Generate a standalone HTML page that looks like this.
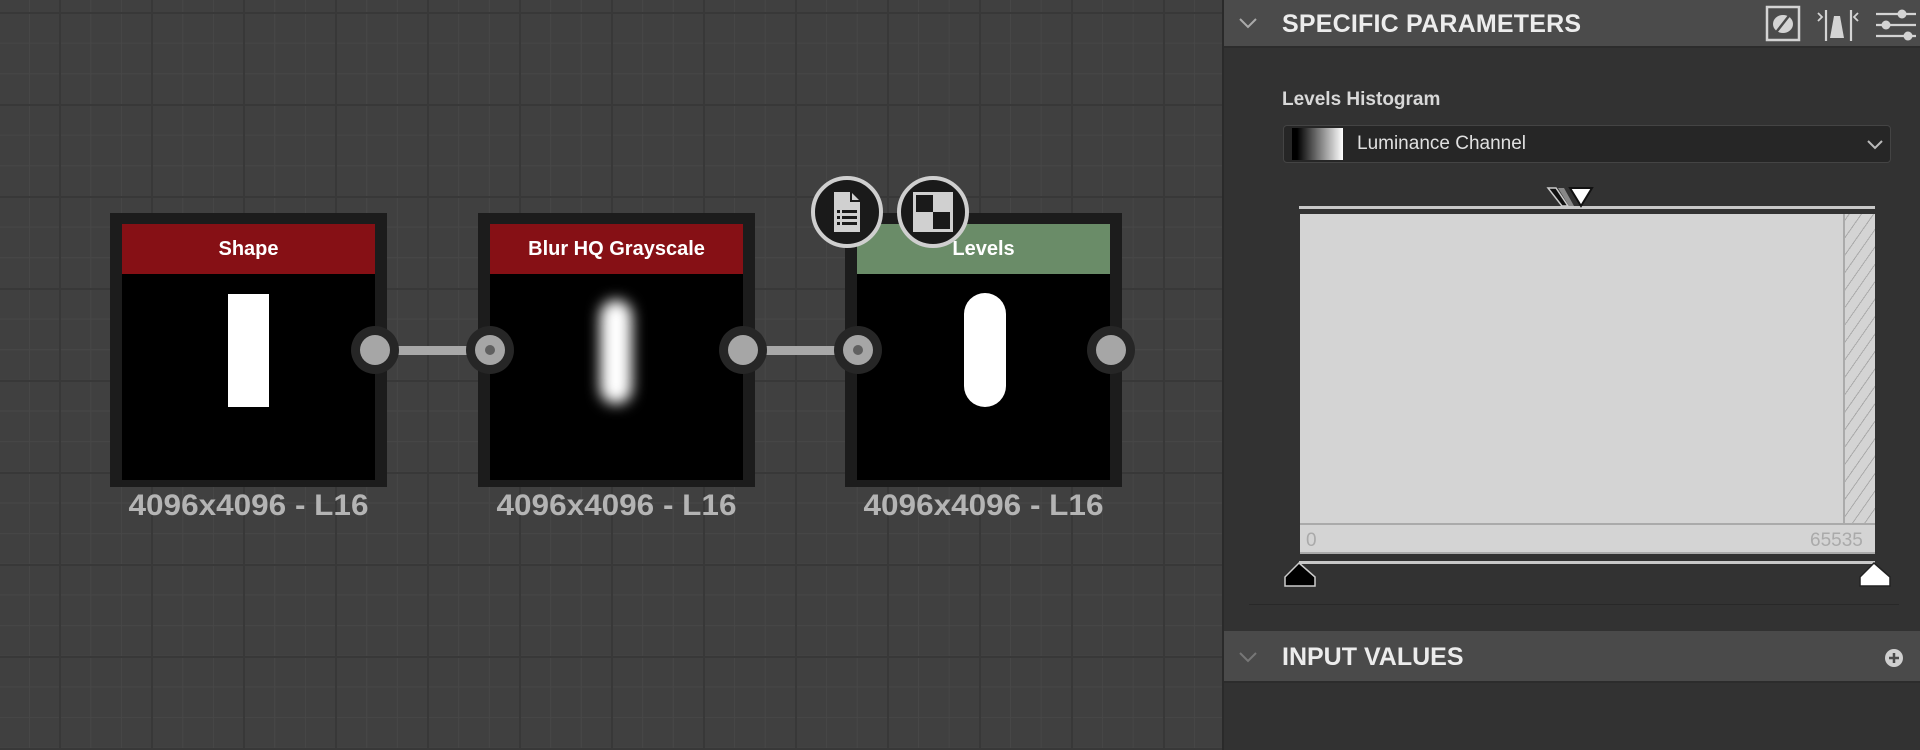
<!DOCTYPE html>
<html><head><meta charset="utf-8"><style>
*{margin:0;padding:0;box-sizing:border-box}
body{width:1920px;height:750px;overflow:hidden;position:relative;background:#404040;font-family:"Liberation Sans",sans-serif}
#graph{position:absolute;left:0;top:0;width:1222px;height:750px;background-color:#404040;
background-image:
linear-gradient(to right,#383838 0,#383838 2px,transparent 2px),
linear-gradient(to bottom,#383838 0,#383838 2px,transparent 2px),
linear-gradient(to right,#474747 0,#474747 1px,transparent 1px),
linear-gradient(to bottom,#474747 0,#474747 1px,transparent 1px);
background-size:92px 92px,92px 92px,30.67px 30.67px,30.67px 30.67px;
background-position:59px 0,0 12px,29px 0,0 12px}
.node{position:absolute;top:213px;width:277px;height:274px;background:#1c1c1c}
.hd{position:absolute;left:12px;top:11px;width:253px;height:50px;color:#fff;font-weight:bold;font-size:20px;text-align:center;line-height:50px}
.bd{position:absolute;left:12px;top:61px;width:253px;height:206px;background:#000;overflow:hidden}
.lbl{position:absolute;top:489px;left:0;width:277px;text-align:center;color:#b4b4b4;font-weight:bold;font-size:30px;transform:scaleX(1.05)}
.sock{position:absolute;width:48px;height:48px;border-radius:50%;background:#262626}
.sock i{position:absolute;left:9px;top:9px;width:30px;height:30px;border-radius:50%;background:#a6a6a6}
.sock b{position:absolute;left:19px;top:19px;width:10px;height:10px;border-radius:50%;background:#606060}
.wire{position:absolute;height:9px;top:346px;background:#a8a8a8}
.ci{position:absolute;width:72px;height:72px;border-radius:50%;background:#1a1a1a;border:4px solid #cfcfcf}
#panel{position:absolute;left:1222px;top:0;width:698px;height:750px;background:#323232;border-left:2px solid #2a2a2a}
.ph{position:absolute;left:0;width:698px;background:#4b4b4b;color:#ececec;font-weight:bold;font-size:25px}
</style></head><body>
<div id="graph">
<div class="wire" style="left:395px;width:90px"></div>
<div class="wire" style="left:763px;width:90px"></div>

<div class="node" style="left:110px"><div class="hd" style="background:#861015">Shape</div><div class="bd"><div style="position:absolute;left:106px;top:20px;width:41px;height:113px;background:#fff"></div></div></div>
<div style="position:absolute;left:110px"><div class="lbl">4096x4096 - L16</div></div>

<div class="node" style="left:478px"><div class="hd" style="background:#861015">Blur HQ Grayscale</div><div class="bd"><div style="position:absolute;left:110px;top:26px;width:32px;height:104px;background:#fff;border-radius:16px;filter:blur(7px)"></div></div></div>
<div style="position:absolute;left:478px"><div class="lbl">4096x4096 - L16</div></div>

<div class="node" style="left:845px"><div class="hd" style="background:#6a8c68">Levels</div><div class="bd"><div style="position:absolute;left:107px;top:19px;width:42px;height:114px;background:#fff;border-radius:21px"></div></div></div>
<div style="position:absolute;left:845px"><div class="lbl">4096x4096 - L16</div></div>

<div class="sock" style="left:351px;top:326px"><i></i></div>
<div class="sock" style="left:466px;top:326px"><i></i><b></b></div>
<div class="sock" style="left:719px;top:326px"><i></i></div>
<div class="sock" style="left:834px;top:326px"><i></i><b></b></div>
<div class="sock" style="left:1087px;top:326px"><i></i></div>

<div class="ci" style="left:811px;top:176px"><svg width="64" height="64" viewBox="0 0 64 64" style="position:absolute;left:0;top:0"><path d="M19 12h17l9 9v31H19z" fill="#d0d0d0"/><path d="M36 12v9h9" fill="none" stroke="#1a1a1a" stroke-width="2"/><g fill="#1a1a1a"><rect x="22" y="30" width="3" height="3"/><rect x="27" y="30" width="15" height="3"/><rect x="22" y="36" width="3" height="3"/><rect x="27" y="36" width="15" height="3"/><rect x="22" y="42" width="3" height="3"/><rect x="27" y="42" width="15" height="3"/></g></svg></div>
<div class="ci" style="left:897px;top:176px"><svg width="64" height="64" viewBox="0 0 64 64" style="position:absolute;left:0;top:0"><rect x="12" y="12" width="40" height="40" fill="#d0d0d0"/><rect x="15" y="15" width="17" height="17" fill="#1a1a1a"/><rect x="32" y="32" width="17" height="17" fill="#1a1a1a"/></svg></div>
</div>

<div id="panel">
<div class="ph" style="top:0;height:48px;border-bottom:2px solid #2c2c2c">
<svg style="position:absolute;left:14px;top:17px" width="20" height="12"><path d="M2 2l8 8 8-8" fill="none" stroke="#aaa" stroke-width="2"/></svg>
<span style="position:absolute;left:58px;top:10px;letter-spacing:0.2px">SPECIFIC PARAMETERS</span>
<svg style="position:absolute;left:540px;top:4px" width="156" height="40">
<rect x="3" y="3" width="32" height="33" fill="none" stroke="#d4d4d4" stroke-width="2.5"/><ellipse cx="19" cy="20" rx="10" ry="9" fill="#d4d4d4"/><path d="M10 31L28 8" stroke="#4b4b4b" stroke-width="2.5"/>
<path d="M54 9l4 4-4 4M94 9l-4 4 4 4" fill="none" stroke="#d4d4d4" stroke-width="1.8"/><path d="M62 6v31M87 6v31" stroke="#d4d4d4" stroke-width="2.2"/><path d="M66 34l4-22h6l4 22z" fill="#d4d4d4"/>
<path d="M112 10h40M112 21h40M112 32h40" stroke="#d4d4d4" stroke-width="2.2"/><circle cx="138" cy="10" r="4.5" fill="#d4d4d4"/><circle cx="122" cy="21" r="4.5" fill="#d4d4d4"/><circle cx="144" cy="32" r="4.5" fill="#d4d4d4"/></svg>
</div>
<div style="position:absolute;left:58px;top:89px;color:#d8d8d8;font-weight:bold;font-size:19px">Levels Histogram</div>
<div style="position:absolute;left:59px;top:125px;width:608px;height:38px;border:1px solid #444;border-radius:4px;background:#262626">
<div style="position:absolute;left:8px;top:2px;width:51px;height:32px;background:linear-gradient(to right,#000 10%,#fff)"></div>
<span style="position:absolute;left:73px;top:7px;color:#e0e0e0;font-size:19px">Luminance Channel</span>
<svg style="position:absolute;left:582px;top:13px" width="18" height="12"><path d="M2 2l7 7 7-7" fill="none" stroke="#bbb" stroke-width="2"/></svg>
</div>
<div style="position:absolute;left:75px;top:206px;width:576px;height:3px;background:#c8c8c8"></div>
<svg style="position:absolute;left:320px;top:184px" width="50" height="26"><path d="M4 4h8l12 18h-6z" fill="#111" stroke="#ccc" stroke-width="1.5"/><path d="M14 4h6l10 18h-5z" fill="#888"/><path d="M26 4h22l-11 18z" fill="#fff" stroke="#111" stroke-width="2"/></svg>
<div style="position:absolute;left:76px;top:214px;width:575px;height:340px;background:#d4d4d4;border-bottom:2px solid #aaa"></div>
<div style="position:absolute;left:619px;top:214px;width:32px;height:311px;border-left:2px solid #aaa;background:repeating-linear-gradient(-55deg,#d4d4d4 0,#d4d4d4 9px,#aaa 9px,#aaa 10px)"></div>
<div style="position:absolute;left:76px;top:523px;width:575px;height:2px;background:#aaa"></div>
<span style="position:absolute;left:82px;top:530px;color:#aaa;font-size:19px">0</span>
<span style="position:absolute;left:586px;top:530px;color:#aaa;font-size:19px">65535</span>
<div style="position:absolute;left:75px;top:561px;width:576px;height:3px;background:#c8c8c8"></div>
<svg style="position:absolute;left:58px;top:560px" width="36" height="28"><path d="M17 3L33 17v9H3v-9z" fill="#000" stroke="#ccc" stroke-width="1.5"/></svg>
<svg style="position:absolute;left:633px;top:560px" width="36" height="28"><path d="M17 3L33 17v9H3v-9z" fill="#fff" stroke="#222" stroke-width="1.5"/></svg>
<div style="position:absolute;left:25px;top:604px;width:650px;height:1px;background:#282828"></div>
<div class="ph" style="top:631px;height:52px;background:#4a4a4a;border-bottom:2px solid #2c2c2c">
<svg style="position:absolute;left:14px;top:20px" width="20" height="12"><path d="M2 2l8 8 8-8" fill="none" stroke="#777" stroke-width="2"/></svg>
<span style="position:absolute;left:58px;top:12px">INPUT VALUES</span>
<svg style="position:absolute;left:660px;top:17px" width="20" height="20"><circle cx="10" cy="10" r="9" fill="#d0d0d0"/><path d="M10 5v10M5 10h10" stroke="#4a4a4a" stroke-width="2.5"/></svg>
</div>
</div>
</body></html>
